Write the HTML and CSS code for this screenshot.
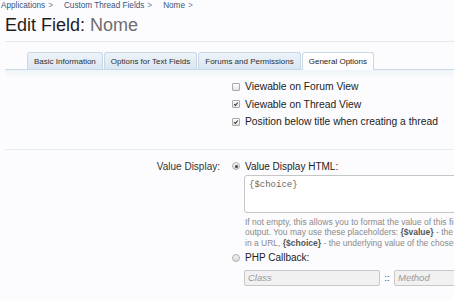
FILE: index.html
```html
<!DOCTYPE html>
<html lang="en">
<head>
  <meta charset="UTF-8">
  <title>Edit Field: Nome</title>
  <link rel="stylesheet" href="styles.css">
</head>
<body>
  <!-- breadcrumb + title -->
  <div class="crumbs">
    <a href="#">Applications</a><span class="gt">&gt;</span><a href="#">Custom Thread Fields</a><span class="gt">&gt;</span><a href="#">Nome</a><span class="gt">&gt;</span>
  </div>
  <h1 class="title">Edit Field: <em>Nome</em></h1>

  <!-- tabs -->
  <ul class="tabs">
    <li>Basic Information</li>
    <li>Options for Text Fields</li>
    <li>Forums and Permissions</li>
    <li class="active">General Options</li>
  </ul>

  <div class="pane">
    <div class="unit checks-unit">
      <div class="label"></div>
      <ul class="checks">
        <li><span class="box"></span>Viewable on Forum View</li>
        <li><span class="box on"><svg viewBox="0 0 8 8"><path d="M1.6 4.2 L3.2 5.8 L6.4 2" /></svg></span>Viewable on Thread View</li>
        <li><span class="box on"><svg viewBox="0 0 8 8"><path d="M1.6 4.2 L3.2 5.8 L6.4 2" /></svg></span>Position below title when creating a thread</li>
      </ul>
    </div>

    <div class="unit">
      <div class="label">Value Display:</div>
      <div class="ctrl">
        <div class="opt"><span class="radio on"></span>Value Display HTML:</div>
        <div class="textarea">{$choice}</div>
        <p class="explain">
          If not empty, this allows you to format the value of this field for display in the<br>
          output. You may use these placeholders: <b>{$value}</b> - the field value, <b>{$valueUrl}</b> - the value for use<br>
          in a URL, <b>{$choice}</b> - the underlying value of the chosen option.
        </p>
        <div class="opt"><span class="radio"></span>PHP Callback:</div>
        <div class="callback">
          <span class="input">Class</span>
          <span class="sep">::</span>
          <span class="input">Method</span>
        </div>
      </div>
    </div>
  </div>
</body>
</html>
```

FILE: styles.css
```css
* {
  margin: 0;
  padding: 0;
  box-sizing: border-box;
}

html, body {
  height: 100%;
  overflow: hidden;
  background: #fcfcfe;
}

body {
  font-family: 'Liberation Sans', Arial, sans-serif;
  color: #222;
  padding: 0 0 0 5px;
}

/* breadcrumb */
.crumbs {
  padding-top: 1px;
  margin-left: -4px;
  font-size: 8.2px;
  line-height: 10px;
  white-space: nowrap;
}

.crumbs a {
  color: #36557a;
  text-decoration: none;
}

.crumbs .gt {
  color: #6d84a0;
  margin: 0 11px 0 3px;
}

.title {
  margin-top: 4px;
  font-size: 18px;
  line-height: 20px;
  font-weight: normal;
  color: #1e1e1e;
  padding-bottom: 6px;
  border-bottom: 1px solid #e2eaf0;
}

.title em {
  font-style: normal;
  color: #6e6e6e;
}

/* tabs */
.tabs {
  list-style: none;
  display: flex;
  margin-top: 10px;
  padding-left: 22px;
  border-bottom: 1px solid #c9d8e5;
  white-space: nowrap;
}

.tabs li {
  height: 17px;
  line-height: 17px;
  padding: 0 6px;
  margin-right: 1px;
  margin-bottom: -1px;
  font-size: 8px;
  color: #2e2e2e;
  border: 1px solid #c9d8e5;
  border-bottom: none;
  border-radius: 3px 3px 0 0;
  background: linear-gradient(#edf3f9, #dae6f1);
}

.tabs li.active {
  height: 18px;
  background: linear-gradient(#ffffff, #fcfcfe);
  color: #222;
}

.pane {
  background: linear-gradient(#eef4f9, #fcfcfe 8px);
}

/* form rows */
.unit {
  display: grid;
  grid-template-columns: 215px 1fr;
  column-gap: 12px;
  font-size: 10px;
  white-space: nowrap;
}

.checks-unit {
  padding: 8px 0 18px;
  border-bottom: 1px solid #e2eef0;
}

.label {
  text-align: right;
  color: #333;
  padding-top: 9px;
  line-height: 15px;
}

.checks-unit .label {
  padding-top: 0;
}

.checks {
  list-style: none;
  font-size: 10.3px;
}

.checks li {
  display: flex;
  align-items: center;
  gap: 5px;
  height: 17.5px;
}

.box {
  width: 8px;
  height: 8px;
  border: 1px solid #a9a9a9;
  border-radius: 1px;
  background: linear-gradient(#ffffff, #e4e4e4);
  display: flex;
}

.box svg {
  width: 6px;
  height: 6px;
  fill: none;
  stroke: #333;
  stroke-width: 1.4;
}

.ctrl {
  padding-top: 9px;
}

.opt {
  display: flex;
  align-items: center;
  gap: 5px;
  line-height: 15px;
}

.radio {
  width: 8px;
  height: 8px;
  border-radius: 50%;
  border: 1px solid #b0b0b0;
  background: linear-gradient(#f4f4f4, #d8d8d8);
  display: flex;
  align-items: center;
  justify-content: center;
}

.radio.on::after {
  content: "";
  width: 3px;
  height: 3px;
  border-radius: 50%;
  background: #444;
}

.textarea {
  margin: 1px 0 0 12px;
  width: 320px;
  height: 38px;
  padding: 4px 4px;
  border: 1px solid #c6c6c6;
  border-radius: 3px;
  background: #fff;
  font-family: 'Liberation Mono', 'Courier New', monospace;
  font-size: 9px;
  line-height: 11px;
  color: #666;
}

.explain {
  margin: 4px 0 0 13px;
  font-size: 8.5px;
  line-height: 10.5px;
  color: #8a8a8a;
}

.explain b {
  color: #555;
}

.explain + .opt {
  margin-top: 2px;
}

.callback {
  display: flex;
  align-items: center;
  margin: 5px 0 0 12px;
}

.callback .input {
  width: 136px;
  height: 16px;
  line-height: 14px;
  padding: 0 3px;
  border: 1px solid #c8c8c8;
  border-radius: 2px;
  background: #f1f1f1;
  color: #9a9a9a;
  font-style: italic;
  font-size: 9.5px;
}

.callback .sep {
  width: 14px;
  text-align: center;
  font-size: 9px;
  color: #333;
}
```
